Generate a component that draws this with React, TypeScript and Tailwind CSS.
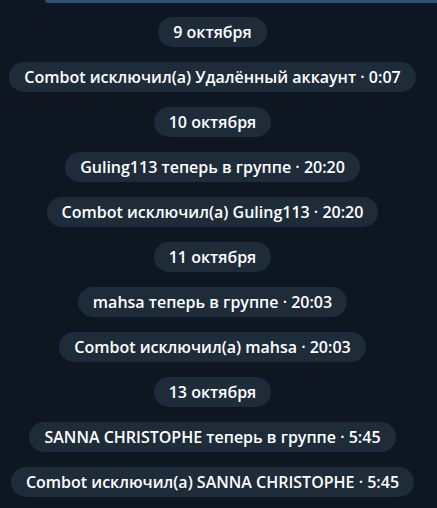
const items: { text: string; date?: boolean }[] = [
  { text: '9 октября', date: true },
  { text: 'Combot исключил(а) Удалённый аккаунт · 0:07' },
  { text: '10 октября', date: true },
  { text: 'Guling113 теперь в группе · 20:20' },
  { text: 'Combot исключил(а) Guling113 · 20:20' },
  { text: '11 октября', date: true },
  { text: 'mahsa теперь в группе · 20:03' },
  { text: 'Combot исключил(а) mahsa · 20:03' },
  { text: '13 октября', date: true },
  { text: 'SANNA CHRISTOPHE теперь в группе · 5:45' },
  { text: 'Combot исключил(а) SANNA CHRISTOPHE · 5:45' },
];

export default function App() {
  return (
    <div className="w-[437px] h-[508px] bg-[#0e1621] overflow-hidden font-['Open_Sans',sans-serif]">
      {/* bottom of the previous message bubble */}
      <div className="ml-[45px] h-[3px] bg-[#2b5278] rounded-bl-[3px]" />
      <div className="flex flex-col items-center gap-[15px] pt-[14px] pr-[12px]">
        {items.map((it, i) => (
          <div
            key={i}
            className="h-[30px] px-[15px] flex items-center rounded-full bg-[#1e2c3a] text-white text-[16px] font-semibold whitespace-nowrap"
          >
            {it.text}
          </div>
        ))}
      </div>
    </div>
  );
}
